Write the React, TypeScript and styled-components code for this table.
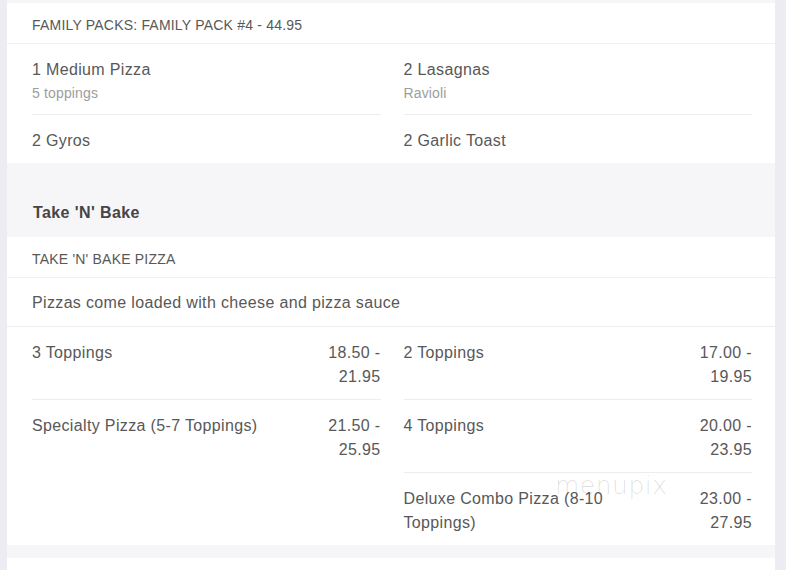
import React from "react";
import styled, { createGlobalStyle } from "styled-components";

const Global = createGlobalStyle`
  html, body { margin: 0; padding: 0; background: #ececf2; }
  body { font-family: "Liberation Sans", Arial, sans-serif; color: #555; }
`;

const Page = styled.div`
  width: 768px;
  margin-left: 7px;
  padding-top: 3px;
  background: #f6f6f9;
  min-height: 570px;
  box-sizing: border-box;
  overflow: hidden;
`;

const Card = styled.div<{ $gap?: number; $minHeight?: number }>`
  position: relative;
  background: #fff;
  margin-bottom: ${(p) => p.$gap ?? 0}px;
  min-height: ${(p) => p.$minHeight ?? 0}px;
`;

const CardHeader = styled.div`
  padding: 13px 25px 9px 25px;
  font-size: 14px;
  letter-spacing: 0.2px;
  line-height: 18px;
  text-transform: uppercase;
  color: #585858;
  border-bottom: 1px solid #f1f1f4;
`;

const Description = styled.div`
  padding: 13px 25px 11px 25px;
  font-size: 16px;
  letter-spacing: 0.35px;
  line-height: 24px;
  color: #585858;
  border-bottom: 1px solid #eeeef2;
`;

const Columns = styled.div`
  display: grid;
  grid-template-columns: 1fr 1fr;
  column-gap: 23px;
  padding: 0 23px 0 25px;
`;

const Column = styled.div`
  display: flex;
  flex-direction: column;
`;

const Item = styled.div`
  display: flex;
  gap: 14px;
  padding: 14px 0 10px;
  & + & {
    border-top: 1px solid #ededf1;
  }
`;

const ItemText = styled.div`
  flex: 1;
  min-width: 0;
`;

const Name = styled.div`
  font-size: 16px;
  letter-spacing: 0.35px;
  line-height: 24px;
  color: #585858;
`;

const Sub = styled.div`
  font-size: 14px;
  letter-spacing: 0.15px;
  line-height: 22px;
  color: #9d9d9d;
`;

const Price = styled.div`
  flex: 0 0 64px;
  text-align: right;
  font-size: 16px;
  letter-spacing: 0.35px;
  line-height: 24px;
  color: #585858;
`;

const SectionTitle = styled.div`
  padding: 38px 25px 12px 26px;
  font-size: 16px;
  letter-spacing: 0.4px;
  line-height: 24px;
  font-weight: bold;
  color: #454545;
`;

const Watermark = styled.div`
  position: absolute;
  left: 548px;
  top: 234px;
  font-family: "DejaVu Sans", sans-serif;
  font-size: 25px;
  font-weight: 300;
  letter-spacing: 0.5px;
  color: rgba(0, 0, 0, 0.12);
  pointer-events: none;
`;

type MenuItem = { name: string; sub?: string; price?: string };

const ItemList = ({ items }: { items: MenuItem[] }) => (
  <Column>
    {items.map((it) => (
      <Item key={it.name}>
        <ItemText>
          <Name>{it.name}</Name>
          {it.sub && <Sub>{it.sub}</Sub>}
        </ItemText>
        {it.price && <Price>{it.price}</Price>}
      </Item>
    ))}
  </Column>
);

export default function App() {
  return (
    <>
      <Global />
      <Page>
        <Card>
          <CardHeader>Family Packs: Family Pack #4 - 44.95</CardHeader>
          <Columns>
            <ItemList
              items={[
                { name: "1 Medium Pizza", sub: "5 toppings" },
                { name: "2 Gyros" },
              ]}
            />
            <ItemList
              items={[
                { name: "2 Lasagnas", sub: "Ravioli" },
                { name: "2 Garlic Toast" },
              ]}
            />
          </Columns>
        </Card>
        <SectionTitle>Take 'N' Bake</SectionTitle>
        <Card $gap={13}>
          <CardHeader>Take 'N' Bake Pizza</CardHeader>
          <Description>Pizzas come loaded with cheese and pizza sauce</Description>
          <Columns>
            <ItemList
              items={[
                { name: "3 Toppings", price: "18.50 - 21.95" },
                { name: "Specialty Pizza (5-7 Toppings)", price: "21.50 - 25.95" },
              ]}
            />
            <ItemList
              items={[
                { name: "2 Toppings", price: "17.00 - 19.95" },
                { name: "4 Toppings", price: "20.00 - 23.95" },
                { name: "Deluxe Combo Pizza (8-10 Toppings)", price: "23.00 - 27.95" },
              ]}
            />
          </Columns>
          <Watermark>menupix</Watermark>
        </Card>
        <Card $minHeight={40} />
      </Page>
    </>
  );
}
